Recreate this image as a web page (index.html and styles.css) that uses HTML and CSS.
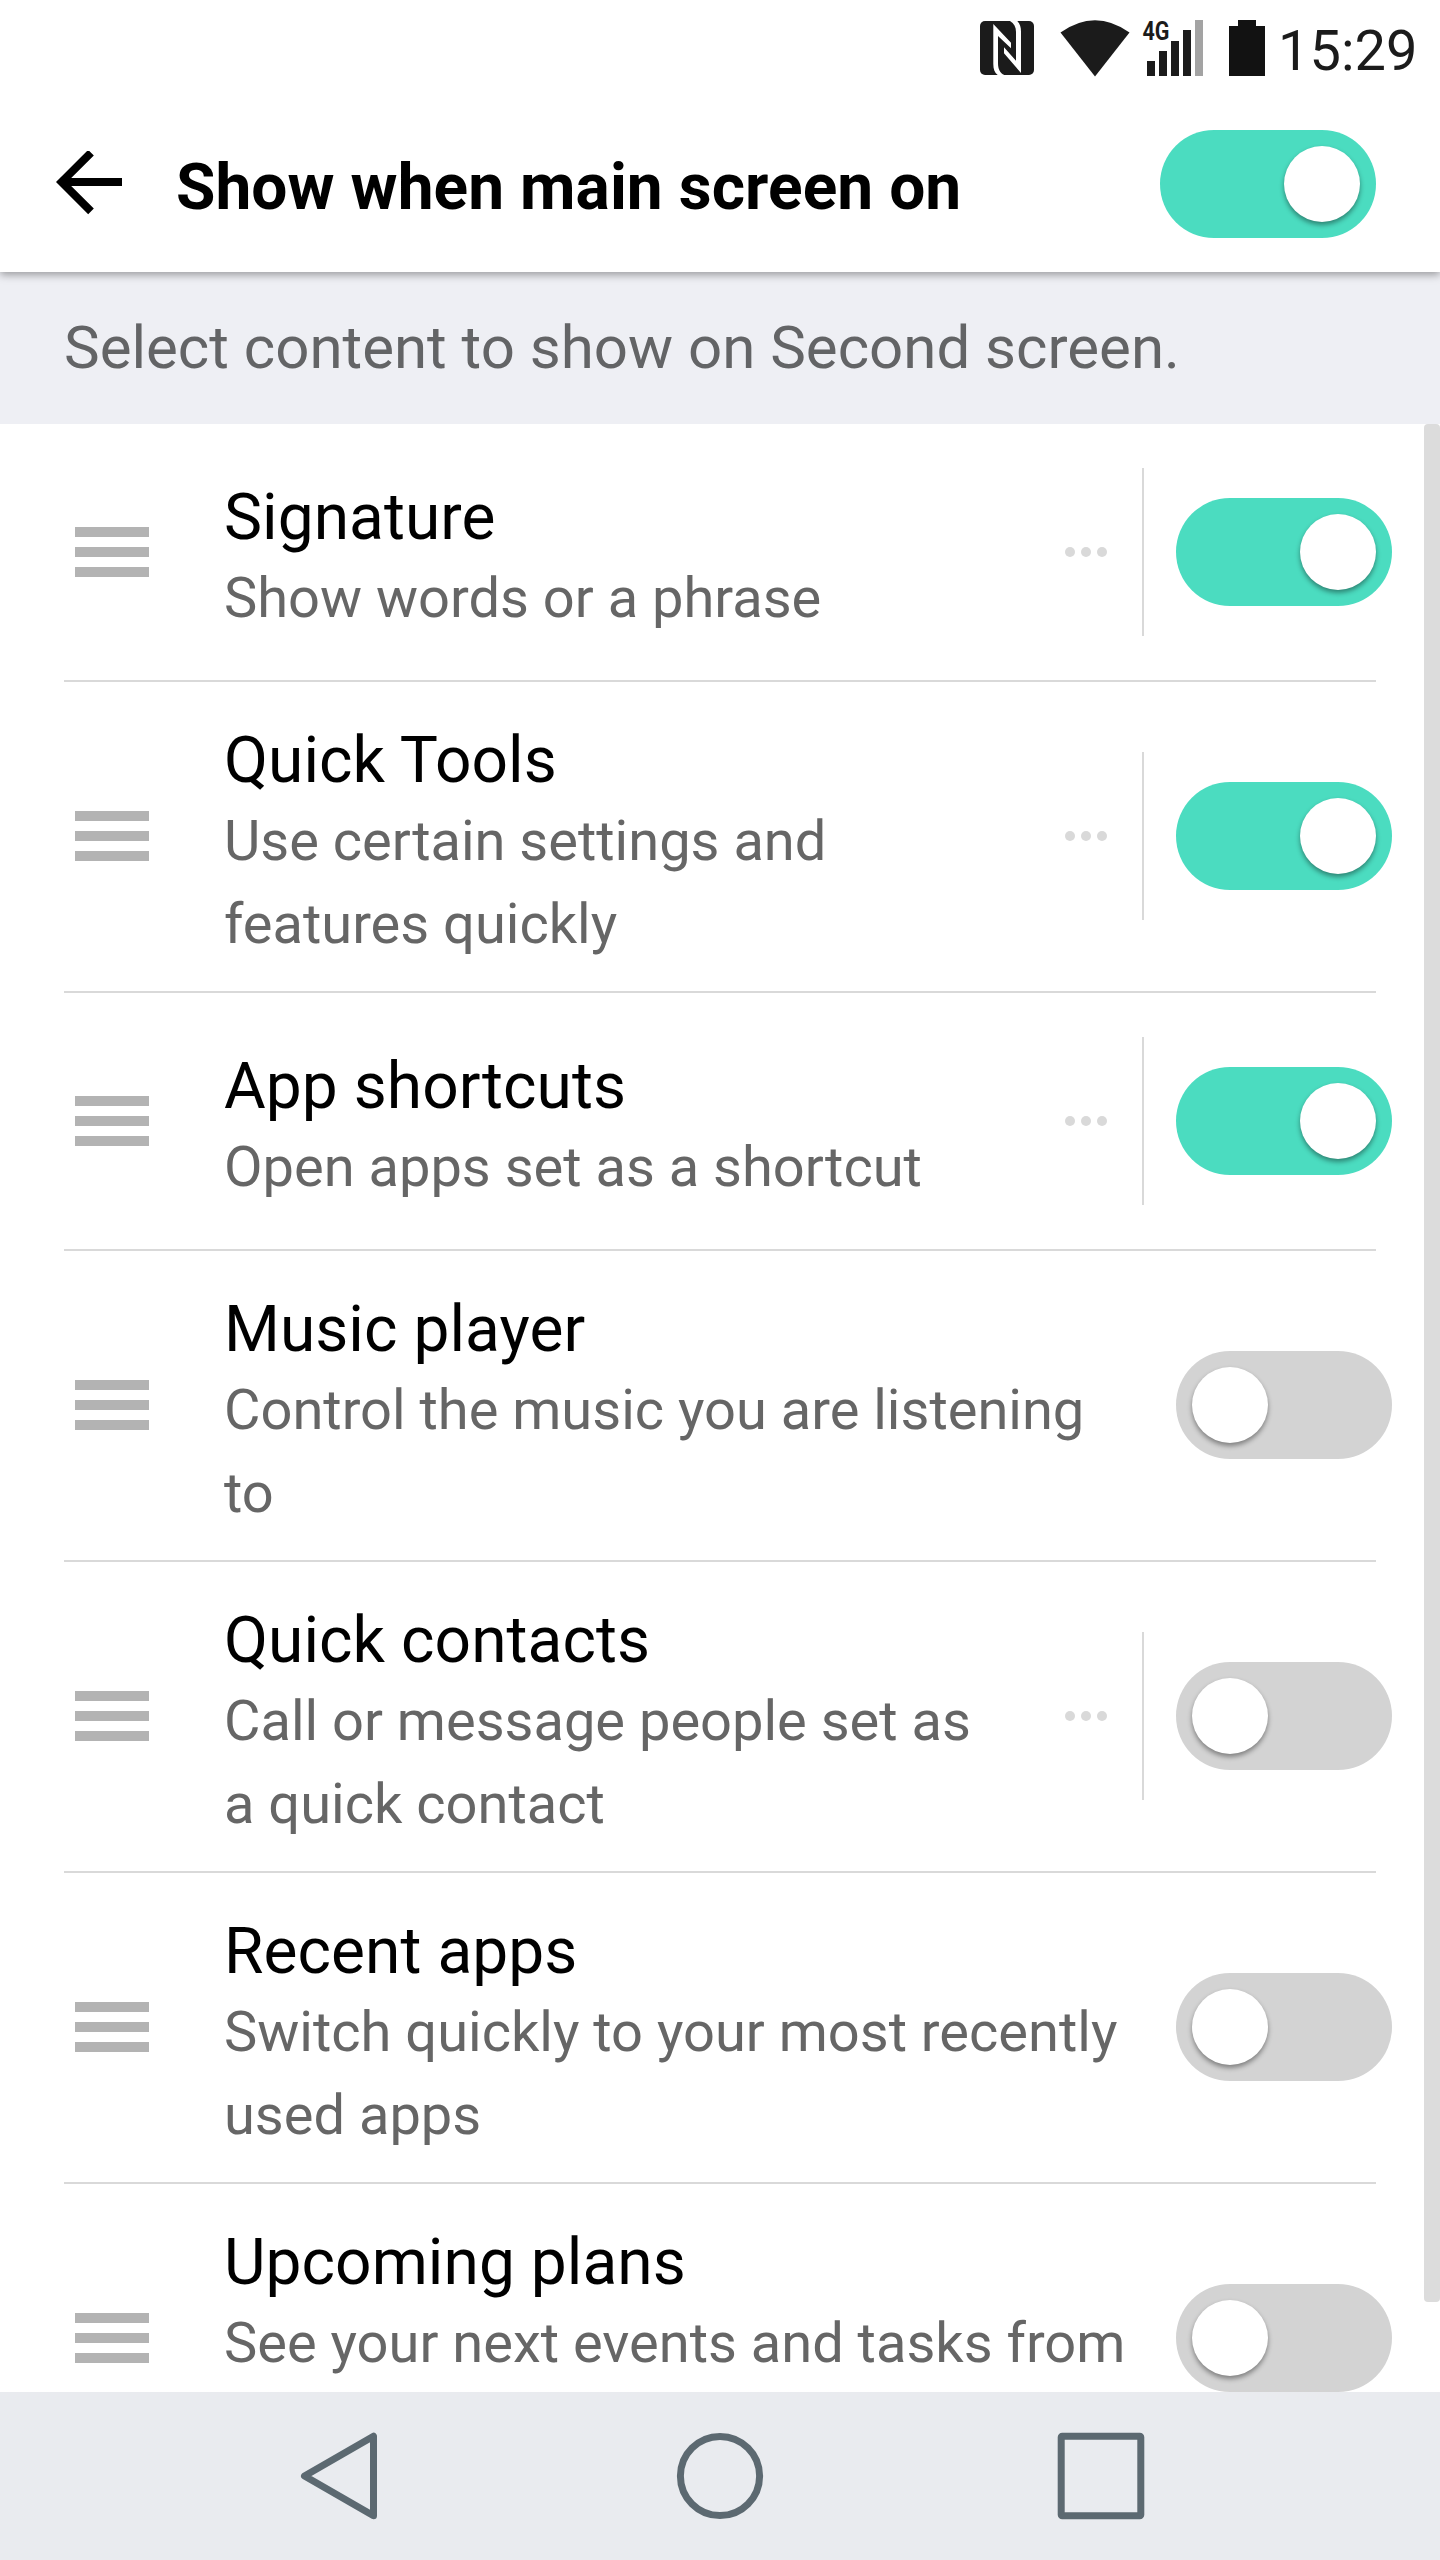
FILE: index.html
```html
<!DOCTYPE html>
<html lang="en">
<head>
<meta charset="utf-8">
<title>Show when main screen on</title>
<link rel="stylesheet" href="styles.css">
</head>
<body>
<div class="screen">
  <div class="statusbar">
    <svg class="nfc" width="54" height="54" viewBox="0 0 54 54">
      <rect width="54" height="54" rx="5" fill="#1b1b1b"/>
      <path d="M13.300 3L31 21.700V27.300L18 15V42C18 48 20 52 24.300 54H17.700C14.500 51.500 13.300 48 13.300 43ZM37.300 0C40 3 41 6 41 10.700V52L24 32.300V26.300L36 39.700V11C36 6 34 2.500 30 0Z" fill="#fff"/>
    </svg>
    <svg class="wifi" width="70" height="57" viewBox="0 0 70 57">
      <path d="M0.500 12.500Q35 -12 69.500 12.500L35 56.500Z" fill="#1b1b1b"/>
    </svg>
    <svg class="signal" width="60" height="57" viewBox="0 0 60 57">
      <text class="signal-label" x="-0.500" y="19.500" textLength="27" lengthAdjust="spacingAndGlyphs">4G</text>
      <path d="M4 41h8v15h-8zM16 31h8v25h-8zM28 21h8v35h-8zM40 10h8v46h-8z" fill="#1b1b1b"/>
      <path d="M52 0h8v56h-8z" fill="#a3a3a3"/>
    </svg>
    <svg class="battery" width="36" height="56" viewBox="0 0 36 56">
      <path d="M9 0h18v6h9v50H0V6h9z" fill="#121212"/>
    </svg>
    <span class="clock">15:29</span>
  </div>

  <header class="header">
    <svg class="back" width="68" height="66" viewBox="0 0 68 66">
      <path d="M66 31H6M35 1.700L5.600 31L35 60.300" fill="none" stroke="#000" stroke-width="8"/>
    </svg>
    <h1 class="heading">Show when main screen on</h1>
    <span class="switch on"><span class="knob"></span></span>
  </header>

  <p class="info">Select content to show on Second screen.</p>

  <main class="list">
    <section class="row">
      <span class="handle"><i></i><i></i><i></i></span>
      <div class="text"><h2>Signature</h2><p>Show words or a phrase</p></div>
      <div class="more"><i></i><i></i><i></i></div>
      <span class="switch on"><span class="knob"></span></span>
    </section>
    <section class="row">
      <span class="handle"><i></i><i></i><i></i></span>
      <div class="text"><h2>Quick Tools</h2><p>Use certain settings and features quickly</p></div>
      <div class="more"><i></i><i></i><i></i></div>
      <span class="switch on"><span class="knob"></span></span>
    </section>
    <section class="row">
      <span class="handle"><i></i><i></i><i></i></span>
      <div class="text"><h2>App shortcuts</h2><p>Open apps set as a shortcut</p></div>
      <div class="more"><i></i><i></i><i></i></div>
      <span class="switch on"><span class="knob"></span></span>
    </section>
    <section class="row">
      <span class="handle"><i></i><i></i><i></i></span>
      <div class="text"><h2>Music player</h2><p>Control the music you are listening to</p></div>
      <span class="switch"><span class="knob"></span></span>
    </section>
    <section class="row">
      <span class="handle"><i></i><i></i><i></i></span>
      <div class="text"><h2>Quick contacts</h2><p>Call or message people set as a&nbsp;quick contact</p></div>
      <div class="more"><i></i><i></i><i></i></div>
      <span class="switch"><span class="knob"></span></span>
    </section>
    <section class="row">
      <span class="handle"><i></i><i></i><i></i></span>
      <div class="text"><h2>Recent apps</h2><p>Switch quickly to your most recently used apps</p></div>
      <span class="switch"><span class="knob"></span></span>
    </section>
    <section class="row">
      <span class="handle"><i></i><i></i><i></i></span>
      <div class="text two-line"><h2>Upcoming plans</h2><p>See your next events and tasks from</p></div>
      <span class="switch"><span class="knob"></span></span>
    </section>
    <span class="scrollbar"></span>
  </main>

  <nav class="navbar">
    <svg width="88" height="88" viewBox="0 0 88 88">
      <path d="M9.500 44L78.500 4.200V83.800Z"/>
    </svg>
    <svg width="88" height="88" viewBox="0 0 88 88">
      <circle cx="44" cy="44" r="39.600"/>
    </svg>
    <svg width="88" height="88" viewBox="0 0 88 88">
      <rect x="4.200" y="4.200" width="79.600" height="79.600" rx="1"/>
    </svg>
  </nav>
</div>
</body>
</html>
```
FILE: styles.css
```css
* { box-sizing: border-box; margin: 0; padding: 0; }

body {
  width: 1440px;
  background: #fff;
  font-family: Roboto, "Liberation Sans", sans-serif;
  color: #000;
}

.screen {
  display: flex;
  flex-direction: column;
  height: 2560px;
  overflow: hidden;
}

.statusbar {
  display: flex;
  align-items: flex-start;
  height: 96px;
  padding: 20px 20px 0 980px;
}
.statusbar svg { flex: none; overflow: visible; }
.nfc { margin: 1px 26px 0 0; }
.wifi { margin-right: 13px; }
.signal { margin-right: 26px; }
.signal-label { font-size: 25px; font-weight: 700; fill: #1b1b1b; }
.battery { margin-right: 13px; }
.clock { font-size: 56px; line-height: 62px; color: #1b1b1b; white-space: nowrap; }

/* The shadow is clipped so that it falls only below the bar. */
.header {
  display: flex;
  align-items: center;
  height: 176px;
  padding: 0 64px 0 56px;
  background: #fff;
  box-shadow: 0 3px 8px rgba(0, 0, 0, 0.35);
  clip-path: inset(0 0 -20px 0);
  z-index: 1;
}
.back { margin-right: 52px; }
.heading { flex: 1; font-size: 64px; font-weight: 700; line-height: 76px; letter-spacing: 0.06px; white-space: nowrap; padding-top: 7px; }

.switch {
  display: flex;
  flex: none;
  align-items: center;
  width: 216px;
  height: 108px;
  padding: 0 16px;
  border-radius: 54px;
  background: #d3d3d3;
}
.switch.on { justify-content: flex-end; background: #4bdcc0; }
.knob {
  width: 76px;
  height: 76px;
  border-radius: 50%;
  background: #fff;
  box-shadow: 0 3px 5px rgba(0, 0, 0, 0.4);
}

.info {
  flex: none;
  height: 152px;
  padding-left: 64px;
  background: #eeeff4;
  color: #636466;
  font-size: 60px;
  line-height: 152px;
}

.list { position: relative; flex: 1; overflow: hidden; }
.row {
  display: flex;
  align-items: center;
  min-height: 258px;
  margin: 0 64px;
  padding: 25px 0;
  border-bottom: 2px solid #d9d9d9;
}
.row .handle, .row .more, .row .switch { margin-bottom: 0.9px; }
.handle { display: flex; flex: none; flex-direction: column; gap: 10px; width: 74px; margin: 0 75px 0 11px; }
.handle i { height: 10px; background: #b3b3b3; }

.text { flex: none; width: 912px; margin-right: 40px; padding-top: 15px; }
.text:has(+ .more) { width: 776px; margin-right: 0; }
.text h2 { font-size: 64px; font-weight: 400; line-height: 78px; letter-spacing: 0.06px; }
.text p { font-size: 56px; line-height: 83px; color: #666; }
.text.two-line p { min-height: 166px; }

.more {
  display: flex;
  flex: none;
  align-items: center;
  gap: 6px;
  width: 144px;
  height: 168px;
  margin-right: 32px;
  padding-left: 65px;
  border-right: 2px solid #d9d9d9;
}
.more i { width: 10px; height: 10px; border-radius: 50%; background: #d9d9d9; }

.scrollbar {
  position: absolute;
  top: 0;
  right: 0;
  width: 16px;
  height: 1878px;
  border-radius: 4px;
  background: #dcdcdc;
}

.navbar {
  display: flex;
  flex: none;
  align-items: center;
  justify-content: center;
  gap: 293px;
  height: 168px;
  background: #e9ebef;
}
.navbar svg { fill: none; stroke: #5c6971; stroke-width: 7; stroke-linejoin: round; }
```
